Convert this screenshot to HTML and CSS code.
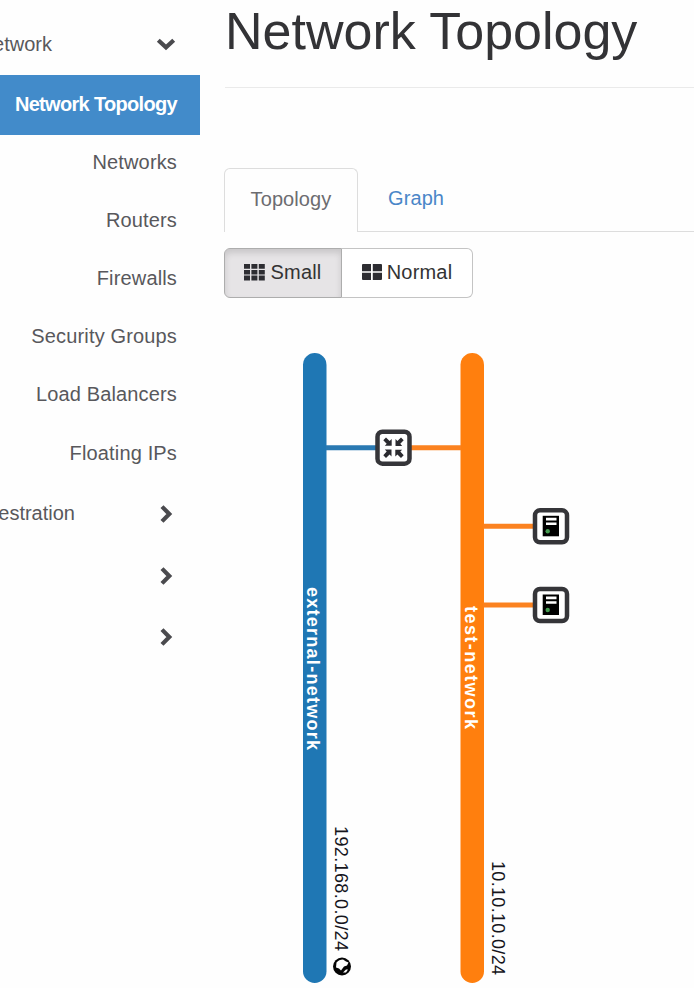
FILE: index.html
```html
<!DOCTYPE html>
<html lang="en">
<head>
<meta charset="utf-8">
<title>Network Topology</title>
<link rel="stylesheet" href="styles.css">
</head>
<body>
<div class="page">
  <nav class="sidebar">
    <div class="group group-network"><span class="group-label">Network</span>
      <svg class="chevron" width="20" height="14" viewBox="0 0 20 14"><path d="M2.3 3.2 10 10.3 17.7 3.2"/></svg>
    </div>
    <a class="item active">Network Topology</a>
    <a class="item">Networks</a>
    <a class="item">Routers</a>
    <a class="item">Firewalls</a>
    <a class="item">Security Groups</a>
    <a class="item">Load Balancers</a>
    <a class="item">Floating IPs</a>
    <div class="group group-orchestration"><span class="group-label">Orchestration</span>
      <svg class="chevron" width="14" height="20" viewBox="0 0 14 20"><path d="M3 2.6 10.3 10 3 17.4"/></svg>
    </div>
    <div class="group"><span class="group-label"></span>
      <svg class="chevron" width="14" height="20" viewBox="0 0 14 20"><path d="M3 2.6 10.3 10 3 17.4"/></svg>
    </div>
    <div class="group"><span class="group-label"></span>
      <svg class="chevron" width="14" height="20" viewBox="0 0 14 20"><path d="M3 2.6 10.3 10 3 17.4"/></svg>
    </div>
  </nav>
  <main class="content">
    <header class="page-header"><h1>Network Topology</h1></header>
    <div class="tabs">
      <a class="tab selected">Topology</a>
      <a class="tab">Graph</a>
    </div>
    <div class="toggle">
      <button class="btn pressed">
        <svg width="21" height="17" viewBox="0 0 21 17"><path d="M0 0h6v4.800H0zM7.400 0h6v4.800h-6zM14.800 0h6v4.800h-6zM0 6h6v4.400H0zM7.400 6h6v4.400h-6zM14.800 6h6v4.400h-6zM0 11.600h6v4.800H0zM7.400 11.600h6v4.800h-6zM14.800 11.600h6v4.800h-6z"/></svg><span>Small</span>
      </button>
      <button class="btn">
        <svg width="20" height="17" viewBox="0 0 20 17"><path d="M0 1Q0 0 1 0H9V7.3H0zM10.800 0H19Q20 0 20 1V7.3H10.800zM0 8.800H9V16H1Q0 16 0 15zM10.800 8.800H20V15Q20 16 19 16H10.800z"/></svg><span>Normal</span>
      </button>
    </div>
    <svg class="canvas" width="470" height="690" viewBox="224 298 470 690">
      <defs>
        <g id="server">
          <rect class="node" x="-16" y="-16" width="32" height="32" rx="5"/>
          <path d="M-8.300-10.500H8V10H-8.300z" fill="#000"/>
          <path d="M-5-8.500H5.500V-5.800H-5zM-5-3.800H5.500V-1.200H-5z" fill="#fff"/>
          <circle cx="-3.300" cy="5" r="2.200" fill="#459b50"/>
        </g>
        <path id="arrow" d="M-1.800-2V-8.700L-3.900-6.800-7.500-10.200-10.200-7.500-6.800-3.900-8.700-2z"/>
      </defs>
      <rect x="303" y="353" width="23.500" height="630" rx="11.750" fill="#1f77b4"/>
      <rect x="460.500" y="353" width="23.500" height="630" rx="11.750" fill="#ff7f0e"/>
      <path class="link external" d="M326 447.700H378"/>
      <path class="link test" d="M408 447.700H461M483.500 526.300H536M483.500 605H536"/>
      <g transform="translate(393.500 447.700)">
        <rect class="node" x="-16" y="-16" width="32" height="32" rx="5"/>
        <g fill="#2b2b30">
          <use href="#arrow"/><use href="#arrow" transform="rotate(90)"/><use href="#arrow" transform="rotate(180)"/><use href="#arrow" transform="rotate(270)"/>
        </g>
      </g>
      <use href="#server" x="551" y="526.300"/>
      <use href="#server" x="551" y="605"/>
      <text class="net-name" transform="translate(307 587) rotate(90)" textLength="163">external-network</text>
      <text class="net-name" transform="translate(464.500 606) rotate(90)" textLength="123">test-network</text>
      <text class="cidr" transform="translate(334.500 826) rotate(90)" textLength="125">192.168.0.0/24</text>
      <text class="cidr" transform="translate(492 861) rotate(90)" textLength="114">10.10.10.0/24</text>
      <g transform="translate(342 966.500)">
        <circle r="9" fill="#050505"/>
        <path d="M-5.500-4Q-3-7 1-7L4-5 6.500-4 5-1 2 0-1 4-3 2-6 1zM1 6 4 3 6 3 4 6z" fill="#fff"/>
      </g>
    </svg>
  </main>
</div>
</body>
</html>
```

FILE: styles.css
```css
* { box-sizing: border-box; }
body {
  margin: 0;
  background: #fefefe;
  color: #333;
  font: 20px/28px "Liberation Sans", Arial, sans-serif;
}
.page { display: flex; width: 694px; height: 988px; overflow: hidden; }
.sidebar { width: 200px; flex: none; padding-top: 14px; color: #58585c; }
.item {
  display: flex;
  align-items: center;
  justify-content: flex-end;
  height: 58.2px;
  padding: 0 23px 4px 0;
  white-space: nowrap;
  letter-spacing: 0.15px;
}
.item.active {
  height: 60px;
  padding-bottom: 1px;
  background: #428bca;
  color: #fff;
  font-weight: bold;
  letter-spacing: -0.68px;
}
.group {
  display: flex;
  align-items: center;
  justify-content: space-between;
  height: 61px;
  padding-right: 27px;
}
.group-network { height: 60.5px; padding-right: 24px; }
.group-orchestration { height: 64px; margin-top: -2px; }
.group-label { display: flex; justify-content: flex-end; width: 75px; }
.group-orchestration .group-label { padding-bottom: 2px; }
.group-network .group-label { width: 52px; }
.chevron path { fill: none; stroke: #4a4a4e; stroke-width: 4.2; }
.content { flex: none; width: 470px; margin-left: 24px; }
.page-header { height: 88px; margin-left: 1px; border-bottom: 1px solid #eaeaea; }
h1 {
  margin: 0;
  padding-top: 1px;
  color: #333336;
  font-size: 52px;
  font-weight: normal;
  line-height: 60px;
  white-space: nowrap;
}
.tabs { display: flex; height: 64px; margin-top: 80px; border-bottom: 1px solid #ddd; }
.tab {
  display: flex;
  align-items: center;
  height: 64px;
  padding: 0 30px 4px;
  color: #4a86c8;
  letter-spacing: 0.1px;
}
.tab.selected {
  justify-content: center;
  width: 134px;
  padding: 0 0 4px;
  border: 1px solid #ddd;
  border-bottom: 0;
  border-radius: 6px 6px 0 0;
  background: #fefefe;
  color: #6c6c70;
}
.toggle { display: flex; height: 50px; margin: 16px 0 0; }
.btn {
  display: flex;
  align-items: center;
  justify-content: center;
  gap: 5px;
  width: 131px;
  padding: 0 0 2px;
  border: 1px solid #c4c4c4;
  border-left: 0;
  border-radius: 0 6px 6px 0;
  background: #fff;
  color: #333;
  font: inherit;
  letter-spacing: 0.2px;
}
.btn svg { fill: #2d2d32; }
.btn.pressed {
  width: 118px;
  border: 1px solid #adadad;
  border-radius: 6px 0 0 6px;
  background: #e6e4e6;
  box-shadow: inset 0 4px 6px rgba(0, 0, 0, 0.13);
}
.canvas { display: block; }
.link { fill: none; stroke-width: 5; }
.link.external { stroke: #2a79b2; }
.link.test { stroke: #fb8220; }
.node { fill: #fff; stroke: #353539; stroke-width: 4.5; }
.net-name { fill: #fff; font-size: 18px; font-weight: bold; }
.cidr { fill: #15151c; font-size: 18px; }
```
